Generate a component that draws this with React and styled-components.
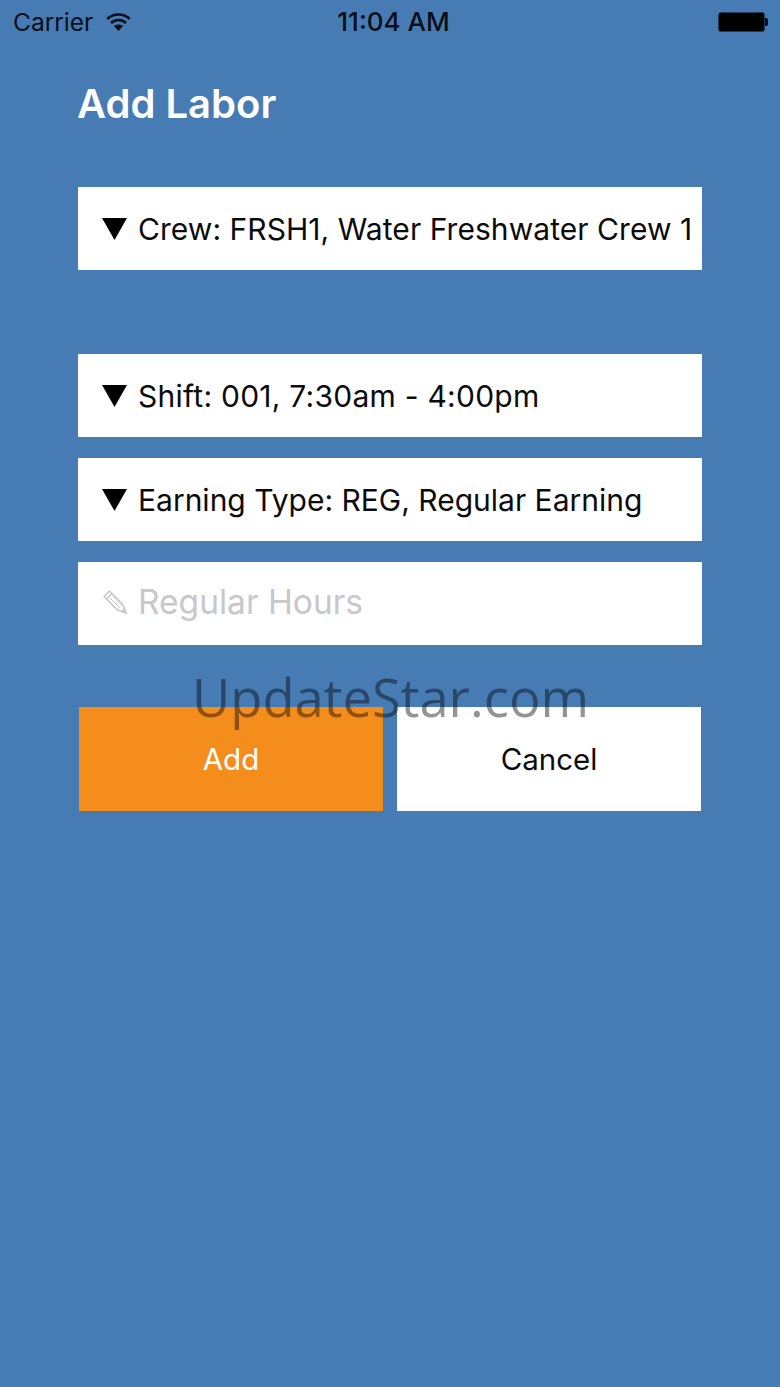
import React from 'react';
import styled, { createGlobalStyle } from 'styled-components';

const GlobalStyle = createGlobalStyle`
	html, body {
		margin: 0;
		padding: 0;
		background-color: #477bb4;
	}
`;

const Screen = styled.div`
	position: relative;
	width: 780px;
	height: 1387px;
	overflow: hidden;
	background-color: #477bb4;
	font-family: Inter, "Liberation Sans", sans-serif;
`;

const StatusBar = styled.div`
	display: grid;
	grid-template-columns: 1fr auto 1fr;
	align-items: center;
	height: 43px;
	padding: 0 12px 0 13px;
	color: #0a0f16;
	font-size: 24.5px;
`;

const Carrier = styled.div`
	display: flex;
	align-items: center;
	gap: 13px;
`;

const Clock = styled.div`
	margin-left: 6px;
	font-size: 26px;
	font-weight: 500;
`;

const Battery = styled.div`
	justify-self: end;
	display: flex;
	align-items: center;
`;

const BatteryBody = styled.div`
	width: 45px;
	height: 18px;
	border: 1px solid #1d3a5c;
	border-radius: 3px;
	background-color: #000;
`;

const BatteryTip = styled.div`
	width: 3px;
	height: 8px;
	background-color: #0a0f16;
	border-radius: 0 2px 2px 0;
`;

const Form = styled.div`
	display: flex;
	flex-direction: column;
	padding: 0 78px;
`;

const Title = styled.h1`
	margin: 36px 0 58px -1px;
	color: #fff;
	font-size: 40px;
	line-height: 50px;
	font-weight: 600;
`;

const Field = styled.div`
	display: flex;
	align-items: center;
	height: 83px;
	margin-bottom: ${props => props.$gap || 21}px;
	padding-left: 24px;
	padding-bottom: ${props => (props.$placeholder ? 4 : 0)}px;
	box-sizing: border-box;
	background-color: #fff;
	color: ${props => (props.$placeholder ? '#c7c7cd' : '#0b0b0b')};
	font-size: ${props => (props.$placeholder ? 33.5 : 30)}px;
	letter-spacing: ${props => props.$tracking || 0}px;
	white-space: nowrap;
	overflow: hidden;
`;

const FieldIcon = styled.span`
	flex: none;
	display: flex;
	justify-content: center;
	width: 25px;
	margin-right: 11px;
`;

const Buttons = styled.div`
	display: flex;
	gap: 14px;
	margin: 41px 1px 0;
`;

const Button = styled.div`
	flex: 1;
	display: flex;
	align-items: center;
	justify-content: center;
	height: 104px;
	background-color: ${props => (props.$primary ? '#f48d1c' : '#fff')};
	color: ${props => (props.$primary ? '#fff' : '#0b0b0b')};
	font-size: 29.5px;
`;

const Watermark = styled.div`
	position: absolute;
	top: 660px;
	left: 192px;
	color: rgba(0, 0, 0, 0.42);
	font-family: "Open Sans", sans-serif;
	font-size: 52.5px;
	line-height: 74px;
`;

const WifiIcon = () => (
	<svg width="25" height="18" viewBox="0 0 25 18" fill="none" stroke="#0a0f16" strokeWidth="2.6">
		<path d="M1.2 6 C7.5 0 17.5 0 23.8 6" />
		<path d="M5 10 C9.5 6 15.5 6 20 10" />
		<path d="M12.5 18 L8 13 C10.5 11 14.5 11 17 13 Z" fill="#0a0f16" stroke="none" />
	</svg>
);

const Arrow = () => (
	<svg width="25" height="22" viewBox="0 0 25 22">
		<path d="M0 0 H25 L12.5 22 Z" fill="#000" />
	</svg>
);

const PencilIcon = () => (
	<svg width="24" height="24" viewBox="0 0 24 24" fill="none" stroke="#c7c7cd" strokeWidth="1.5" strokeLinejoin="round">
		<path d="M1 6.5 L6.5 1 L19.5 14 L23 23 L14 19.5 Z" />
		<path d="M3.5 9 L9 3.5" />
		<path d="M6.5 7.5 L17 18 M9 5.5 L19.5 16 M5 10 L15 20" strokeWidth="1" />
		<path d="M23 23 L19 21.5 L21.5 19 Z" fill="#c7c7cd" />
	</svg>
);

const App = () => (
	<Screen>
		<GlobalStyle />
		<StatusBar>
			<Carrier>
				Carrier
				<WifiIcon />
			</Carrier>
			<Clock>11:04 AM</Clock>
			<Battery>
				<BatteryBody />
				<BatteryTip />
			</Battery>
		</StatusBar>
		<Form>
			<Title>Add Labor</Title>
			<Field $gap={84} $tracking={0.05}>
				<FieldIcon><Arrow /></FieldIcon>
				Crew: FRSH1, Water Freshwater Crew 1
			</Field>
			<Field $tracking={0.25}>
				<FieldIcon><Arrow /></FieldIcon>
				Shift: 001, 7:30am - 4:00pm
			</Field>
			<Field>
				<FieldIcon><Arrow /></FieldIcon>
				Earning Type: REG, Regular Earning
			</Field>
			<Field $placeholder>
				<FieldIcon><PencilIcon /></FieldIcon>
				Regular Hours
			</Field>
			<Buttons>
				<Button $primary>Add</Button>
				<Button>Cancel</Button>
			</Buttons>
		</Form>
		<Watermark>UpdateStar.com</Watermark>
	</Screen>
);

export default App;
